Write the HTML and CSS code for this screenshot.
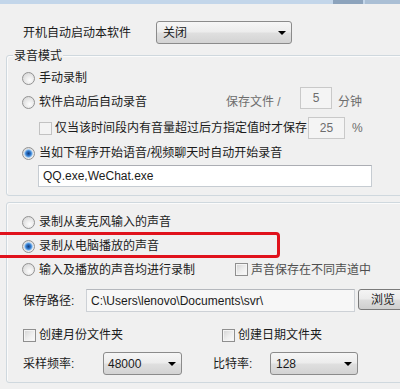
FILE: index.html
```html
<!DOCTYPE html>
<html lang="zh-CN">
<head>
<meta charset="utf-8">
<title>录音设置</title>
<link rel="stylesheet" href="styles.css">
</head>
<body>
<div class="titlebar"><span class="cap cap-a"></span><span class="cap cap-b"></span></div>

<div class="top-row">
  <span class="lbl w-start">开机自动启动本软件</span>
  <div class="combo w-close"><span>关闭</span><i class="arrow"></i></div>
</div>

<div class="group g1">
  <span class="legend">录音模式</span>
  <div class="row r-a">
    <span class="radio"></span><span class="lbl">手动录制</span>
  </div>
  <div class="row r-b">
    <span class="radio"></span><span class="lbl w-auto">软件启动后自动录音</span>
    <span class="lbl dim w-save">保存文件 /</span>
    <div class="field disabled w-min up">5</div>
    <span class="lbl dim unit">分钟</span>
  </div>
  <div class="row r-c">
    <span class="check disabled"></span><span class="lbl w-only">仅当该时间段内有音量超过后方指定值时才保存</span>
    <div class="field disabled w-vol">25</div>
    <span class="lbl dim pct">%</span>
  </div>
  <div class="row r-d">
    <span class="radio on"></span><span class="lbl">当如下程序开始语音/视频聊天时自动开始录音</span>
  </div>
  <div class="field text w-apps">QQ.exe,WeChat.exe</div>
</div>

<div class="group g2">
  <div class="row r-e">
    <span class="radio"></span><span class="lbl">录制从麦克风输入的声音</span>
  </div>
  <div class="row r-f">
    <span class="radio on"></span><span class="lbl">录制从电脑播放的声音</span>
  </div>
  <div class="row r-g">
    <div class="item w-both"><span class="radio"></span><span class="lbl">输入及播放的声音均进行录制</span></div>
    <span class="check"></span><span class="lbl gray">声音保存在不同声道中</span>
  </div>
  <div class="row r-path">
    <span class="lbl w-path">保存路径:</span>
    <div class="field ro w-dir">C:\Users\lenovo\Documents\svr\</div>
    <div class="button">浏览</div>
  </div>
  <div class="row r-dirs">
    <div class="item w-month"><span class="check"></span><span class="lbl">创建月份文件夹</span></div>
    <span class="check"></span><span class="lbl">创建日期文件夹</span>
  </div>
  <div class="row r-rate">
    <span class="lbl w-rate">采样频率:</span>
    <div class="combo w-hz"><span>48000</span><i class="arrow"></i></div>
    <span class="lbl w-bit">比特率:</span>
    <div class="combo w-kb"><span>128</span><i class="arrow"></i></div>
  </div>
</div>

<div class="highlight"></div>
</body>
</html>
```

FILE: styles.css
```css
html, body {
  margin: 0;
  padding: 0;
}
body {
  width: 400px;
  height: 389px;
  overflow: hidden;
  position: relative;
  background: #f0f0f0;
  color: #1b1b1b;
  font-family: "Liberation Sans", "Noto Sans CJK SC", sans-serif;
  font-size: 12px;
}

.titlebar {
  height: 4px;
  display: flex;
  justify-content: flex-end;
  background: #c3d6ea;
}
.cap { height: 4px; }
.cap-a { width: 30px; margin-right: 2px; background: #8ca3bc; }
.cap-b { width: 35px; background: #aabfd5; }

.lbl {
  line-height: 16px;
  white-space: nowrap;
  flex: none;
}
.dim { color: #6d6d6d; }
.gray { color: #4e4e4e; }

.top-row {
  display: flex;
  align-items: center;
  height: 23px;
  margin-top: 17px;
  padding-left: 23px;
}
.w-start { width: 133px; }

.combo {
  box-sizing: border-box;
  height: 23px;
  display: flex;
  align-items: center;
  justify-content: space-between;
  border: 1px solid #8b8b8b;
  border-radius: 3px;
  background: linear-gradient(#f6f6f6 0%, #ececec 48%, #dfdfdf 52%, #d3d3d3 100%);
  padding: 0 5px 0 6px;
  flex: none;
}
.combo span { line-height: 16px; }
.arrow {
  width: 0;
  height: 0;
  border-left: 4px solid transparent;
  border-right: 4px solid transparent;
  border-top: 4px solid #000;
  margin-top: 1px;
}
.w-close { width: 136px; }
.w-hz { width: 79px; padding-left: 4px; }
.w-kb { width: 88px; padding-left: 5px; }

.group {
  box-sizing: border-box;
  display: flex;
  flex-direction: column;
  align-items: flex-start;
  margin-left: 6px;
  margin-right: -12px;
  border: 1px solid #cfd8de;
  border-radius: 3px;
  box-shadow: inset 1px 1px 0 #fbfbfb;
  padding-left: 15px;
}
.g1 {
  margin-top: 11px;
  padding-bottom: 8px;
}
.g2 {
  margin-top: 6px;
  padding-bottom: 7px;
}
.legend {
  margin: -8px 0 0 -9px;
  padding: 0 1px;
  height: 16px;
  line-height: 16px;
  background: #f0f0f0;
}

.row {
  display: flex;
  align-items: center;
  height: 24px;
}
.item {
  display: flex;
  align-items: center;
  flex: none;
}
.r-a { margin-top: 2px; }
.r-c { margin-top: 2px; padding-left: 17px; }
.r-d { margin-top: 1px; }
.r-e { margin-top: 7px; }
.r-g { height: 23px; }
.r-path { margin-top: 8px; height: 23px; align-items: flex-start; padding-left: 1px; }
.r-path .lbl { margin-top: 4px; }
.r-dirs { margin-top: 11px; padding-left: 1px; }
.r-rate { margin-top: 5px; height: 23px; padding-left: 1px; }

.radio {
  box-sizing: border-box;
  width: 13px;
  height: 13px;
  border-radius: 50%;
  border: 1px solid #929292;
  background: radial-gradient(circle at 60% 65%, #fdfdfd 0, #e9e9e9 45%, #d2d2d2 100%);
  margin-right: 4px;
  flex: none;
}
.radio.on {
  background:
    radial-gradient(circle at 50% 50%, #123f7a 0, #2a6cc0 2px, #4f96de 3px, #a8cdf1 4px, rgba(255,255,255,0) 4.6px),
    radial-gradient(circle at 60% 65%, #fdfdfd 0, #e9e9e9 45%, #d2d2d2 100%);
}

.check {
  box-sizing: border-box;
  width: 13px;
  height: 13px;
  border: 1px solid #8f8f8f;
  background: linear-gradient(135deg, #d3d3d3 0%, #eeeeee 55%, #fbfbfb 100%);
  box-shadow: inset 0 0 0 1px #f4f4f4;
  margin-right: 3px;
  flex: none;
}
.check.disabled {
  border-color: #c2c2c2;
  background: #f3f3f3;
  box-shadow: none;
}

.field {
  box-sizing: border-box;
  height: 22px;
  display: flex;
  align-items: center;
  border: 1px solid #c6ccd2;
  border-top-color: #abadb3;
  background: #fff;
  line-height: 16px;
  white-space: nowrap;
  flex: none;
}
.field.disabled {
  justify-content: center;
  color: #6d6d6d;
  background: #f4f4f4;
  border-color: #c9c9c9;
}
.field.text { padding-left: 4px; }
.field.ro {
  height: 23px;
  padding-left: 4px;
  background: #f7f7f7;
  border-color: #cdd1d6;
  border-top-color: #b5b8bd;
}

.w-auto { width: 108px; margin-right: 79px; }
.w-save { width: 74px; }
.w-min { width: 32px; margin-top: -8px; }
.unit { margin-left: 6px; }
.w-only { width: 253px; }
.w-vol { width: 37px; }
.pct { margin-left: 7px; }
.w-apps { width: 334px; margin-left: 16px; }

.w-both { width: 213px; }
.w-path { width: 63px; }
.w-dir { width: 269px; margin-right: 3px; }
.button {
  box-sizing: border-box;
  width: 50px;
  height: 21px;
  padding-left: 12px;
  display: flex;
  align-items: center;
  border: 1px solid #7a7a7a;
  border-radius: 3px;
  background: linear-gradient(#f4f4f4 0%, #ebebeb 48%, #dddddd 52%, #cfcfcf 100%);
  line-height: 16px;
  flex: none;
}
.w-month { width: 199px; }
.w-rate { width: 80px; }
.w-bit { width: 57px; margin-left: 31px; }

.highlight {
  position: absolute;
  left: -4px;
  top: 232px;
  width: 284px;
  height: 26px;
  box-sizing: border-box;
  border: 3px solid #e0121c;
  border-radius: 4px;
}
```
